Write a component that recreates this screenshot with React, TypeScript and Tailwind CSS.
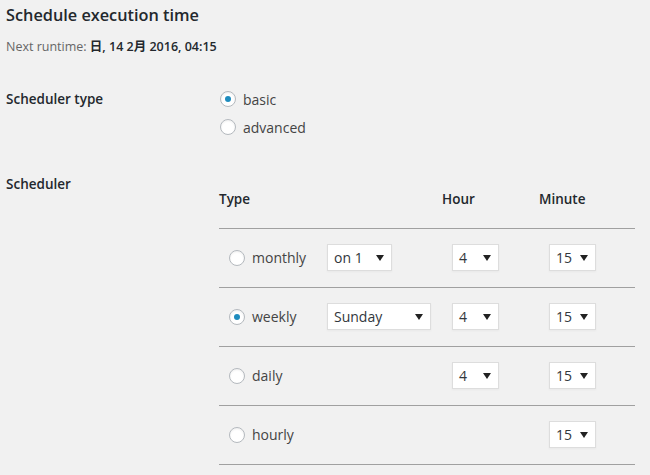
import React from "react";

const font = { fontFamily: '"Open Sans", "Noto Sans CJK JP", sans-serif' };

function Radio({ checked }: { checked?: boolean }) {
  return (
    <span className="flex h-4 w-4 shrink-0 items-center justify-center rounded-full border border-[#b4b9be] bg-white shadow-[inset_0_1px_2px_rgba(0,0,0,0.07)]">
      {checked && <span className="h-[6px] w-[6px] rounded-full bg-[#1e8cbe]" />}
    </span>
  );
}

function Select({ value, w }: { value: string; w: string }) {
  return (
    <div className={`flex h-[27px] items-center justify-between border border-[#ddd] bg-white pl-[6px] pr-[7px] text-[14px] text-[#32373c] shadow-[0_1px_2px_rgba(0,0,0,0.04)] ${w}`}>
      <span>{value}</span>
      <svg width="8" height="6" viewBox="0 0 8 6"><path d="M0 0h8L4 6z" fill="#222" /></svg>
    </div>
  );
}

function Row({ label, checked, day, hour }: { label: string; checked?: boolean; day?: React.ReactNode; hour?: boolean }) {
  return (
    <div className="flex h-[59px] items-center border-b border-[#a0a0a0] pb-[1px]">
      <div className="flex w-[223px] items-center pl-[10px]">
        <div className="flex w-[98px] items-center gap-[7px]">
          <Radio checked={checked} />
          <span className="text-[14px] text-[#444]">{label}</span>
        </div>
        {day}
      </div>
      <div className="w-[97px] pl-[10px]">{hour && <Select value="4" w="w-[47px]" />}</div>
      <div className="w-[96px] pl-[10px]">
        <Select value="15" w="w-[47px]" />
      </div>
    </div>
  );
}

export default function App() {
  return (
    <div style={font} className="h-[475px] w-[650px] overflow-hidden bg-[#f1f1f1] pl-[6px] text-[#23282d]">
      <div className="pt-[3px] text-[16.3px] font-semibold leading-[24px]">Schedule execution time</div>
      <div className="mt-[10px] text-[12.5px] leading-[20px] text-[#666]">
        Next runtime: <b className="font-semibold text-[#23282d]">日, 14 2月 2016, 04:15</b>
      </div>
      <div className="mt-[32px] flex">
        <div className="w-[214px] text-[13.5px] font-semibold leading-[20px]">Scheduler type</div>
        <div className="flex flex-col gap-[8px] text-[14px] text-[#444]">
          <label className="flex h-[20px] items-center gap-[7px]"><Radio checked />basic</label>
          <label className="flex h-[20px] items-center gap-[7px]"><Radio />advanced</label>
        </div>
      </div>
      <div className="mt-[37px] flex">
        <div className="w-[213px] text-[13.5px] font-semibold leading-[20px]">Scheduler</div>
        <div className="mt-[15px] w-[416px]">
          <div className="flex h-[40px] border-b border-[#a0a0a0] text-[13.5px] font-semibold leading-[20px]">
            <div className="w-[223px]">Type</div>
            <div className="w-[97px]">Hour</div>
            <div className="w-[96px]">Minute</div>
          </div>
          <Row label="monthly" day={<Select value="on 1" w="w-[65px]" />} hour />
          <Row label="weekly" checked day={<Select value="Sunday" w="w-[104px]" />} hour />
          <Row label="daily" hour />
          <Row label="hourly" />
        </div>
      </div>
    </div>
  );
}
